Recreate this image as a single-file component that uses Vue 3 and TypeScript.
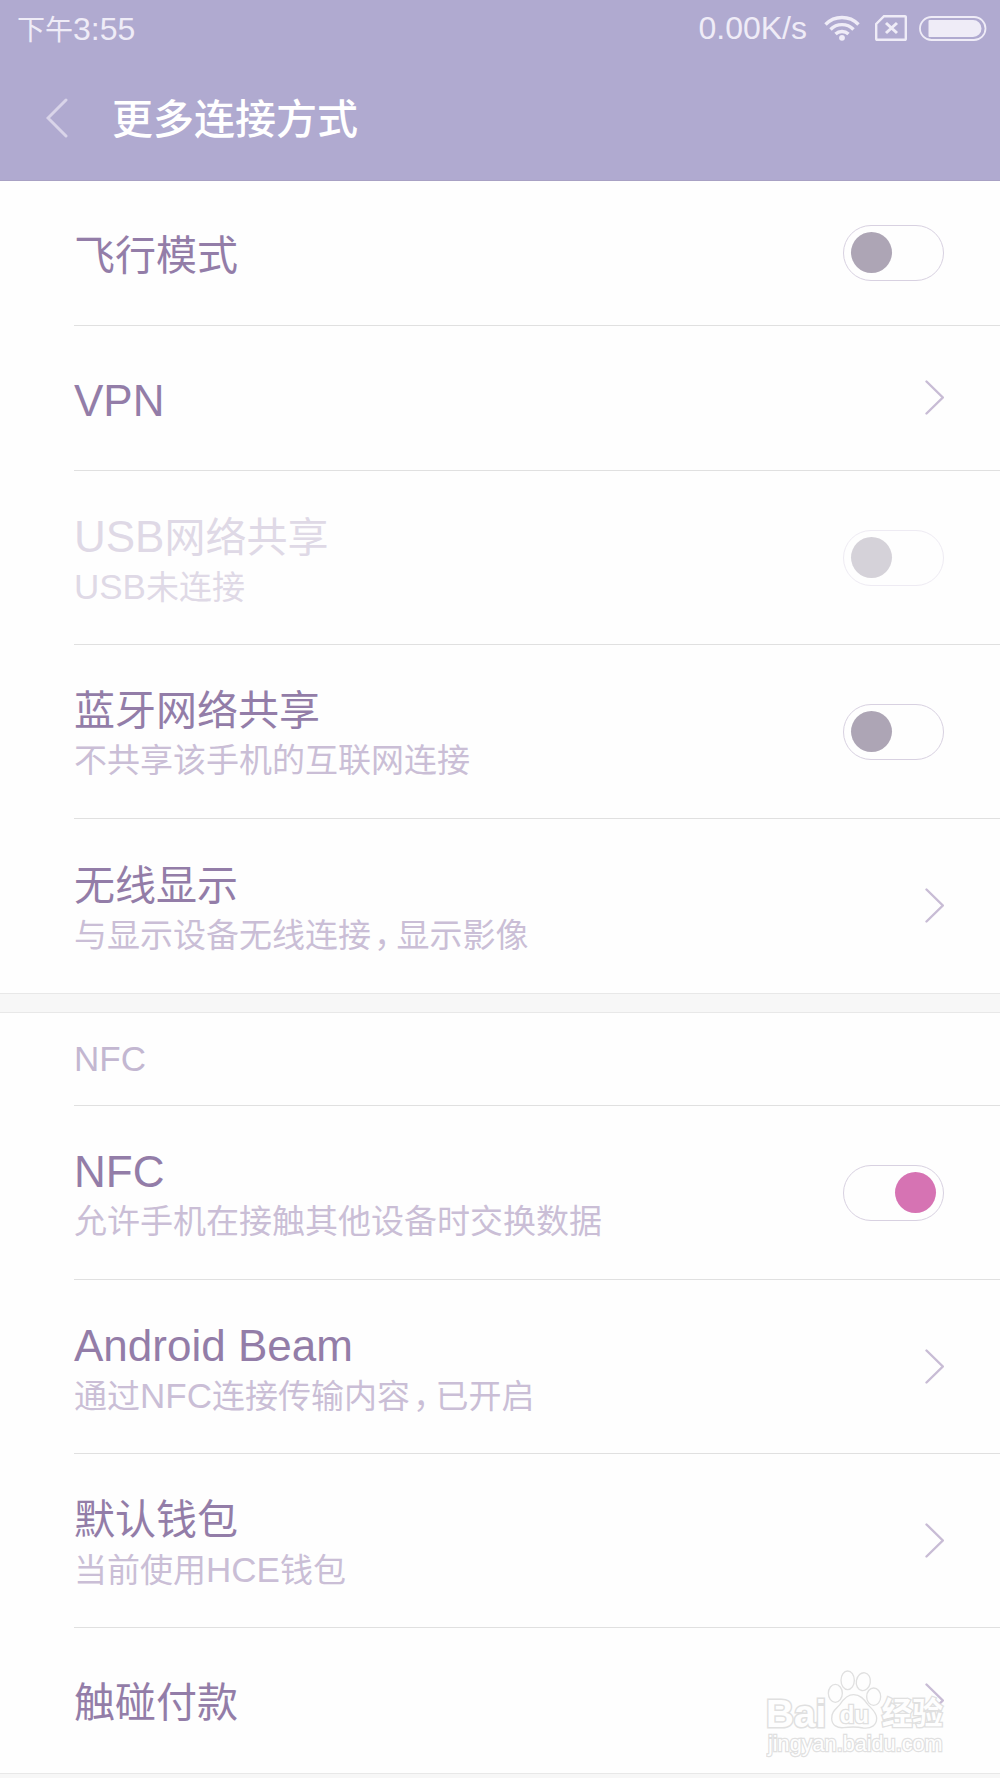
<script setup lang="ts">
import { reactive } from 'vue'

interface Item {
  id: string
  title: string
  summary?: string
  kind: 'switch' | 'link'
  on?: boolean
  disabled?: boolean
  marked?: boolean
}

interface Group {
  heading?: string
  items: Item[]
}

interface Run {
  text: string
  kind: 'han' | 'roman' | 'comma'
}

const groups = reactive<Group[]>([
  {
    items: [
      { id: 'airplane', title: '飞行模式', kind: 'switch', on: false },
      { id: 'vpn', title: 'VPN', kind: 'link' },
      { id: 'usb', title: 'USB网络共享', summary: 'USB未连接', kind: 'switch', on: false, disabled: true },
      { id: 'bluetooth', title: '蓝牙网络共享', summary: '不共享该手机的互联网连接', kind: 'switch', on: false },
      { id: 'display', title: '无线显示', summary: '与显示设备无线连接，显示影像', kind: 'link' },
    ],
  },
  {
    heading: 'NFC',
    items: [
      { id: 'nfc', title: 'NFC', summary: '允许手机在接触其他设备时交换数据', kind: 'switch', on: true },
      { id: 'beam', title: 'Android Beam', summary: '通过NFC连接传输内容，已开启', kind: 'link' },
      { id: 'wallet', title: '默认钱包', summary: '当前使用HCE钱包', kind: 'link' },
      { id: 'pay', title: '触碰付款', kind: 'link', marked: true },
    ],
  },
])

// Splits mixed text so that Latin words can be set slightly larger than Chinese ones.
function runs(text: string): Run[] {
  const parts = text.match(/[\x20-\x7e]+|，|[^\x20-\x7e，]+/g) ?? []
  return parts.map((part) => ({
    text: part,
    kind: part === '，' ? 'comma' : /^[\x20-\x7e]/.test(part) ? 'roman' : 'han',
  }))
}
</script>

<template>
  <div class="page">
    <header class="top">
      <div class="status">
        <div class="clock">下午<span class="latin">3:55</span></div>
        <div class="indicators">
          <span class="latin">0.00K/s</span>
          <svg class="wifi" width="36" height="26" viewBox="0 0 36 26" aria-hidden="true">
            <g fill="none" stroke="currentColor" stroke-width="3.400">
              <path d="M1.500 9.500A23 23 0 0 1 34.500 9.500" />
              <path d="M6.500 14.500A16 16 0 0 1 29.500 14.500" />
              <path d="M11.500 19A9.500 9.500 0 0 1 24.500 19" />
            </g>
            <circle cx="18" cy="22.800" r="2.900" fill="currentColor" />
          </svg>
          <svg class="sim" width="32" height="26" viewBox="0 0 32 26" aria-hidden="true">
            <path d="M9 1.200H30a.8.8 0 0 1 .8.8V24a.8.8 0 0 1-.8.8H2a.8.8 0 0 1-.8-.8V9Z" fill="none" stroke="currentColor" stroke-width="2.400" />
            <path d="M11 8L22 18M22 8L11 18" stroke="currentColor" stroke-width="3" />
          </svg>
          <svg class="battery" width="68" height="25" viewBox="0 0 68 25" aria-hidden="true">
            <rect x="1" y="1" width="65.500" height="23" rx="11.500" fill="none" stroke="currentColor" stroke-width="1.800" />
            <path d="M10.500 4H54a8.500 8.500 0 0 1 0 17H10.500a1 1 0 0 1-1-1V5a1 1 0 0 1 1-1Z" fill="currentColor" />
          </svg>
        </div>
      </div>
      <div class="bar">
        <button type="button" class="back" aria-label="返回">
          <svg width="22" height="40" viewBox="0 0 22 40" aria-hidden="true">
            <path d="M20 2L2 20L20 38" fill="none" stroke="currentColor" stroke-width="3" stroke-linecap="round" />
          </svg>
        </button>
        <h1>更多连接方式</h1>
      </div>
    </header>

    <main>
      <section v-for="(group, index) in groups" :key="index" class="group">
        <h2 v-if="group.heading" class="heading">{{ group.heading }}</h2>
        <component
          :is="item.kind === 'switch' ? 'label' : 'a'"
          v-for="item in group.items"
          :key="item.id"
          class="row"
          :class="{ tall: item.summary, disabled: item.disabled }"
          :for="item.kind === 'switch' ? item.id : undefined"
          :href="item.kind === 'link' ? '#' + item.id : undefined"
        >
          <span class="text">
            <span class="title"><span v-for="(run, n) in runs(item.title)" :key="n" :class="run.kind">{{ run.text }}</span></span>
            <span v-if="item.summary" class="summary"><span v-for="(run, n) in runs(item.summary)" :key="n" :class="run.kind">{{ run.text }}</span></span>
          </span>
          <input
            v-if="item.kind === 'switch'"
            :id="item.id"
            v-model="item.on"
            class="switch"
            type="checkbox"
            role="switch"
            :disabled="item.disabled"
          />
          <svg v-else class="chevron" width="20" height="36" viewBox="0 0 20 36" aria-hidden="true">
            <path d="M2.500 1.500L18.800 17.500L2.500 33.500" fill="none" stroke="currentColor" stroke-width="2.400" stroke-linecap="round" />
          </svg>
          <svg v-if="item.marked" class="watermark" width="180" height="90" viewBox="78 90 540 270" aria-hidden="true">
            <g fill="#fefefe" stroke="#e0e0e0" stroke-width="5" paint-order="stroke">
              <text x="78" y="260" font-size="116" font-weight="700" stroke-width="9">Bai</text>
              <g paint-order="normal" stroke-width="4">
                <ellipse cx="286" cy="160" rx="21" ry="27" />
                <ellipse cx="323" cy="121" rx="20" ry="28" />
                <ellipse cx="370" cy="125" rx="21" ry="27" transform="rotate(10 370 125)" />
                <ellipse cx="401" cy="170" rx="21" ry="26" />
                <path d="M341 164C322 164 310 178 300 193C288 207 274 215 275 236C276 256 292 265 311 263C332 260 351 260 370 264C393 267 410 256 410 235C410 216 394 206 383 193C372 178 361 164 341 164Z" />
              </g>
              <text x="299" y="248" font-size="72" font-weight="700" stroke-width="8">du</text>
              <text x="425" y="252" font-size="92" font-weight="700" stroke-width="8">经验</text>
              <text x="84" y="332" font-size="65" font-weight="400" stroke-width="7">jingyan.baidu.com</text>
            </g>
          </svg>
        </component>
      </section>
    </main>
  </div>
</template>

<style>
body {
  margin: 0;
  background: #f7f7f7;
}
</style>

<style scoped>
.page {
  overflow: hidden;
  font-family: "Liberation Sans", "Noto Sans CJK SC", sans-serif;
}

.top {
  box-sizing: border-box;
  height: 181px;
  border-bottom: 1px solid #a8a1c4;
  background: #b0aad0;
  color: #fff;
}

.status {
  display: flex;
  align-items: center;
  justify-content: space-between;
  height: 56px;
  padding: 0 13px 0 17px;
  color: #efecf7;
}

.clock {
  padding-top: 3px;
  font-size: 28px;
  line-height: 56px;
}

.latin {
  font-size: 32px;
  line-height: 56px;
}

.indicators {
  display: flex;
  align-items: center;
}

.wifi {
  margin-left: 17px;
}

.sim {
  margin-left: 15px;
}

.battery {
  margin-left: 12px;
}

.bar {
  display: flex;
  align-items: center;
  height: 124px;
}

.back {
  display: flex;
  margin: 0 44px 0 46px;
  padding: 0;
  border: 0;
  background: none;
  color: #d9d4e9;
}

h1 {
  margin: 0;
  padding-top: 4px;
  font-size: 41px;
  font-weight: 500;
  line-height: 56px;
}

.group {
  background: #fefefe;
  border-bottom: 1px solid #e8e8e8;
}

.group + .group {
  margin-top: 18px;
  border-top: 1px solid #e8e8e8;
}

.heading {
  margin: 0 0 0 74px;
  border-bottom: 1px solid #e0e0e0;
  color: #c3b7d1;
  font-size: 35px;
  font-weight: 400;
  line-height: 92px;
}

.row {
  position: relative;
  display: flex;
  align-items: center;
  justify-content: space-between;
  box-sizing: border-box;
  min-height: 145px;
  margin-left: 74px;
  padding-right: 56px;
  border-bottom: 1px solid #e0e0e0;
  color: #937da8;
  text-decoration: none;
}

.row.tall {
  min-height: 174px;
}

.row:last-child {
  border-bottom: 0;
}

.text {
  display: flex;
  flex-direction: column;
  padding-top: 5px;
}

.title {
  height: 54px;
  font-size: 41px;
  line-height: 54px;
}

.title .roman {
  font-size: 44px;
}

.summary {
  height: 46px;
  color: #cabed6;
  font-size: 33px;
  line-height: 46px;
}

.summary .roman {
  font-size: 35px;
}

.comma {
  margin: 0 6px 0 3px;
  font-feature-settings: "halt";
}

.disabled .title,
.disabled .summary {
  color: #dfd9e6;
}

.switch {
  appearance: none;
  flex: none;
  box-sizing: border-box;
  width: 101px;
  height: 56px;
  margin: 0;
  padding: 6px 7px;
  border: 1px solid #d8d1e1;
  border-radius: 28px;
  background: #fefefe;
}

.switch::before {
  content: "";
  display: block;
  width: 41px;
  height: 41px;
  border-radius: 50%;
  background: #ada5b5;
}

.switch:checked::before {
  margin-left: auto;
  background: #d673b3;
}

.switch:disabled {
  border-color: #eeebf3;
}

.switch:disabled::before {
  background: #d5d2d9;
}

.chevron {
  flex: none;
  color: #c8bcd5;
}

.watermark {
  position: absolute;
  top: 42px;
  right: 54px;
}
</style>
